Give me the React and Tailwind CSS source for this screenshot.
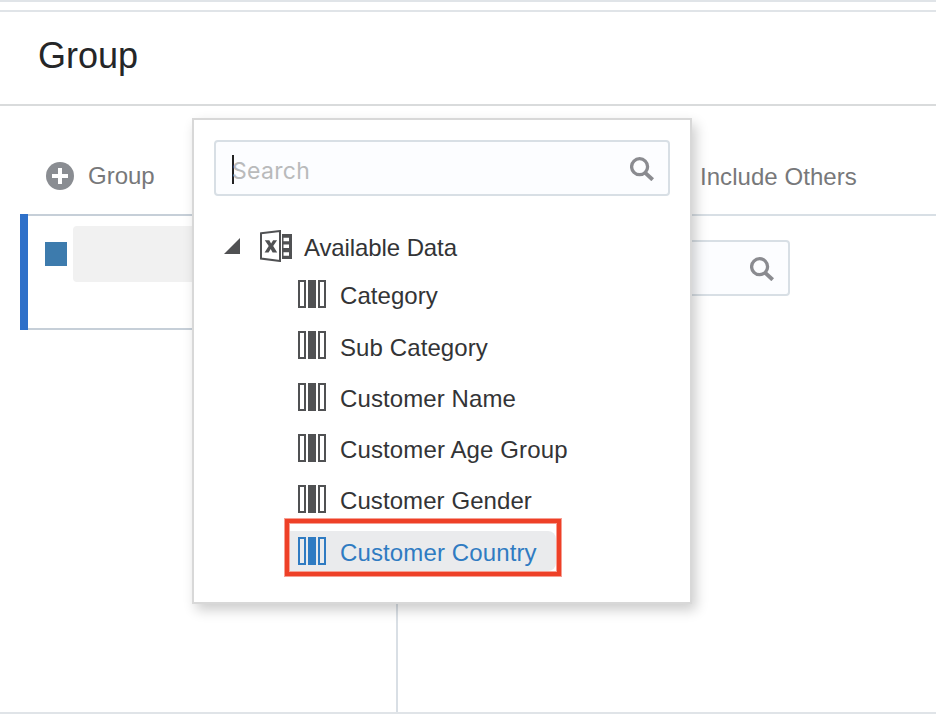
import React from "react";

const COLUMNS = [
  { label: "Category", height: "h-[51px]", text: "top-0.5 tracking-[0.05px]" },
  { label: "Sub Category", height: "h-[52px]", text: "top-[3px] tracking-[0.1px]" },
  { label: "Customer Name", height: "h-[51px]", text: "top-0.5 tracking-[0.1px]" },
  { label: "Customer Age Group", height: "h-[51px]", text: "top-0.5 tracking-[0.12px]" },
  { label: "Customer Gender", height: "h-[52px]", text: "top-0.5 tracking-[0.08px]" },
  { label: "Customer Country", height: "h-[51px]", text: "top-0.5 tracking-[0.12px]", selected: true },
];

function PlusIcon() {
  return (
    <svg width="28" height="28" viewBox="0 0 28 28" className="shrink-0">
      <circle cx="14" cy="14" r="14" fill="#8a8d92" />
      <path d="M12 6h4v6h6v4h-6v6h-4v-6H6v-4h6z" fill="#fff" />
    </svg>
  );
}

function SearchIcon() {
  return (
    <svg width="24" height="24" viewBox="0 0 24 24" fill="none" stroke="#8a8b90" className="shrink-0">
      <circle cx="9.6" cy="9.7" r="8" strokeWidth="3.3" />
      <path d="M15 15.6L22.7 22.7" strokeWidth="4" />
    </svg>
  );
}

function ColumnIcon() {
  return (
    <svg width="28" height="28" viewBox="0 0 28 28" fill="none" stroke="currentColor" strokeWidth="2" className="shrink-0">
      <path d="M1 1h6v26H1zM21 1h6v26h-6z" />
      <path d="M10 0h8v28h-8z" fill="currentColor" stroke="none" />
    </svg>
  );
}

function SpreadsheetIcon() {
  return (
    <svg width="32" height="32" viewBox="0 0 32 32" fill="none" className="shrink-0">
      <path d="M1 3.3L20 1V31L1 28.6z" stroke="#505153" strokeWidth="2" />
      <path d="M4.8 10.2h4.5l1.8 3.3 2-3.3h4L13.2 16l4 6.5h-4.6l-1.9-3.6-2.1 3.6h-4L8.7 16z" fill="#505153" />
      <path d="M22 4h10v25H22zM23.5 7.7v3.5H29V7.7zM23.5 14.4V18H29v-3.6zM23.5 22.2v3.5H29v-3.5z" fill="#505153" fillRule="evenodd" />
    </svg>
  );
}

function ColumnRow({ label, height, text, selected }) {
  return (
    <li className={`flex items-center ${height} ${selected ? "text-[#2f7bc2]" : "text-[#505153]"}`}>
      <div className={`flex h-10 items-center gap-3.5 pl-2 ${selected ? "w-[266px] rounded-r-lg bg-[#eaebed]" : ""}`}>
        <ColumnIcon />
        <span className={`relative whitespace-nowrap leading-7 ${text} ${selected ? "" : "text-[#333436]"}`}>{label}</span>
      </div>
    </li>
  );
}

function DataPicker() {
  return (
    <div className="absolute left-[192px] top-[118px] h-[486px] w-[500px] border-2 border-[#d8d8d8] bg-white px-5 pt-5 shadow-[4px_6px_12px_rgba(0,0,0,0.2)]">
      <div className="flex h-14 items-center justify-between rounded border-2 border-[#d8dfe5] bg-[#fcfdff] pl-4 pr-3.5 pt-0.5">
        <div className="flex items-center">
          <span className="h-[29px] w-0.5 bg-[#222]" />
          <span className="-ml-0.5 pt-[3px] font-[Inter,sans-serif] text-[23px] leading-7 tracking-[0.3px] text-[#b9babb]">Search</span>
        </div>
        <SearchIcon />
      </div>
      <div className="mt-[34px] flex h-8 items-center pl-2.5">
        <svg width="16" height="16" viewBox="0 0 16 16" className="shrink-0">
          <path d="M16 0v16H0z" fill="#505153" />
        </svg>
        <div className="ml-5 flex items-center">
          <SpreadsheetIcon />
          <span className="relative top-0.5 ml-3 whitespace-nowrap leading-7 tracking-[-0.1px] text-[#333436]">Available Data</span>
        </div>
      </div>
      <ul className="ml-[76px] mt-[6px]">
        {COLUMNS.map((column) => (
          <ColumnRow key={column.label} {...column} />
        ))}
      </ul>
      <div className="absolute left-[91px] top-[399px] h-[57px] w-[276px] border-4 border-[#ee4027] shadow-[0_0_0_1px_#ee402780,inset_0_0_0_1px_#ee402780]" />
    </div>
  );
}

export default function App() {
  return (
    <div className="relative flex h-[714px] w-[936px] flex-col overflow-hidden border-y-2 border-[#e0e4e8] bg-white font-['Liberation_Sans',Arial,sans-serif] text-2xl">
      <header className="mt-2 flex h-24 shrink-0 items-center border-b-2 border-t-2 border-b-[#d9dbdc] border-t-[#e0e4e8] pb-1 pl-[38px]">
        <h1 className="text-[36px] leading-10 text-[#252628]">Group</h1>
      </header>
      <main className="flex min-h-0 flex-1">
        <section className="flex w-[398px] flex-col">
          <div className="flex h-[108px] shrink-0 items-center gap-3.5 pl-[46px] pt-8">
            <PlusIcon />
            <span className="leading-7 text-[#77787a]">Group</span>
          </div>
          <div className="flex flex-1 items-start border-r-2 border-[#d9dfe5] pl-5">
            <div className="h-[116px] w-2 bg-[#2e70c9]" />
            <div className="flex h-[116px] flex-1 border-y-2 border-[#c6cfd8] pl-[17px] pt-2.5">
              <div className="mt-4 h-6 w-[22px] bg-[#3d7bad]" />
              <div className="ml-1.5 h-14 flex-1 rounded bg-[#f1f1f1]" />
            </div>
          </div>
        </section>
        <section className="flex-1">
          <div className="flex h-[110px] items-center border-b-2 border-[#d8dfe5] pl-[302px] pt-[34px]">
            <span className="leading-7 tracking-[0.05px] text-[#77787a]">Include Others</span>
          </div>
          <div className="ml-5 mt-6 flex h-14 w-[372px] items-center justify-end rounded border-2 border-[#d8dfe5] bg-[#fcfdff] pr-3.5 pt-0.5">
            <SearchIcon />
          </div>
        </section>
      </main>
      {/* The outer top border shifts the overlay's origin. */}
      <div className="absolute left-0 top-[-2px]">
        <DataPicker />
      </div>
    </div>
  );
}
